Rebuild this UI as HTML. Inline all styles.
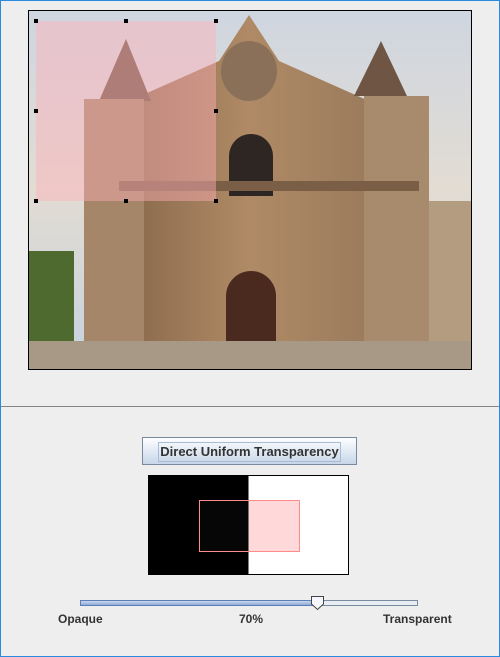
<!DOCTYPE html>
<html><head><style>
html,body{margin:0;padding:0}
body{width:500px;height:657px;background:#eeeeee;position:relative;overflow:hidden;font-family:"Liberation Sans",sans-serif}
.frame{position:absolute;left:0;top:0;width:498px;height:655px;border:1px solid #2a8ae0}
.pic{position:absolute;left:28px;top:10px;width:442px;height:358px;border:1px solid #000;overflow:hidden}
.div{position:absolute;left:1px;right:1px;top:406px;height:1px;background:#858585}
.btn{position:absolute;left:142px;top:437px;width:213px;height:26px;border:1px solid #7a8a9c;background:linear-gradient(#fdfeff,#dfe8f3 55%,#c8d6e8);}
.btn span{position:absolute;left:15px;top:4px;width:181px;height:18px;border:1px solid #a8bcd6;font-size:13px;font-weight:bold;color:#333;text-align:center;line-height:18px}
.prev{position:absolute;left:148px;top:475px;width:199px;height:98px;border:1px solid #000;background:linear-gradient(90deg,#000 50%,#fff 50%)}
.pr{position:absolute;left:199px;top:500px;width:99px;height:50px;border:1px solid #ff8c8c;background:linear-gradient(90deg,#060606 49%,#ffd9d9 49%)}
.track{position:absolute;left:80px;top:600px;width:336px;height:4px;border:1px solid #7a8aa0;background:#e8edf3}
.fill{position:absolute;left:80px;top:600px;width:237px;height:4px;border:1px solid #5d7fb8;background:linear-gradient(#c9d8ee,#8eaad6)}
.lab{position:absolute;top:612px;font-size:12px;font-weight:bold;color:#333}
</style></head><body>
<div class="frame"></div>
<div class="pic">
<svg width="442" height="358" viewBox="0 0 442 358">
<defs><linearGradient id="sky" x1="0" y1="0" x2="0" y2="1"><stop offset="0" stop-color="#cfd6e0"/><stop offset="0.5" stop-color="#e2dcd3"/><stop offset="1" stop-color="#c5d2de"/></linearGradient>
<linearGradient id="st" x1="0" y1="0" x2="1" y2="0"><stop offset="0" stop-color="#8a6a4c"/><stop offset="0.5" stop-color="#b08a66"/><stop offset="1" stop-color="#9a7b5c"/></linearGradient></defs>
<rect width="442" height="358" fill="url(#sky)"/>
<rect x="0" y="240" width="45" height="90" fill="#4e6a2e"/>
<rect x="395" y="190" width="47" height="160" fill="#b49c80"/>
<polygon points="100,90 190,50 220,4 250,50 340,90 340,358 100,358" fill="url(#st)"/>
<polygon points="70,90 97,28 122,90" fill="#6e5544"/>
<rect x="55" y="88" width="60" height="270" fill="#a58668"/>
<polygon points="325,85 352,30 378,85" fill="#6e5544"/>
<rect x="335" y="85" width="65" height="273" fill="#a88a6c"/>
<ellipse cx="220" cy="60" rx="28" ry="30" fill="#8a7058"/>
<path d="M200,185 V145 A22,22 0 0 1 244,145 V185Z" fill="#2e2622"/>
<path d="M197,340 V285 A25,25 0 0 1 247,285 V340Z" fill="#4a2a1e"/>
<rect x="90" y="170" width="300" height="10" fill="#7a5e46"/>
<rect x="0" y="330" width="442" height="28" fill="#a89886"/>
<rect x="7" y="10" width="180" height="180" fill="#ffb0b8" opacity="0.45"/>
<g fill="#000"><rect x="5" y="8" width="4" height="4"/><rect x="95" y="8" width="4" height="4"/><rect x="185" y="8" width="4" height="4"/><rect x="5" y="98" width="4" height="4"/><rect x="185" y="98" width="4" height="4"/><rect x="5" y="188" width="4" height="4"/><rect x="95" y="188" width="4" height="4"/><rect x="185" y="188" width="4" height="4"/></g>
</svg></div>
<div class="div"></div>
<div class="btn"><span>Direct Uniform Transparency</span></div>
<div class="prev"></div>
<div class="pr"></div>
<div class="track"></div>
<div class="fill"></div>
<svg style="position:absolute;left:310px;top:595px" width="15" height="16"><path d="M1.5,1.5 H13.5 V9 L7.5,14.5 L1.5,9Z" fill="#f4f7fb" stroke="#444"/></svg>
<div class="lab" style="left:58px">Opaque</div>
<div class="lab" style="left:239px">70%</div>
<div class="lab" style="left:383px">Transparent</div>
</body></html>
